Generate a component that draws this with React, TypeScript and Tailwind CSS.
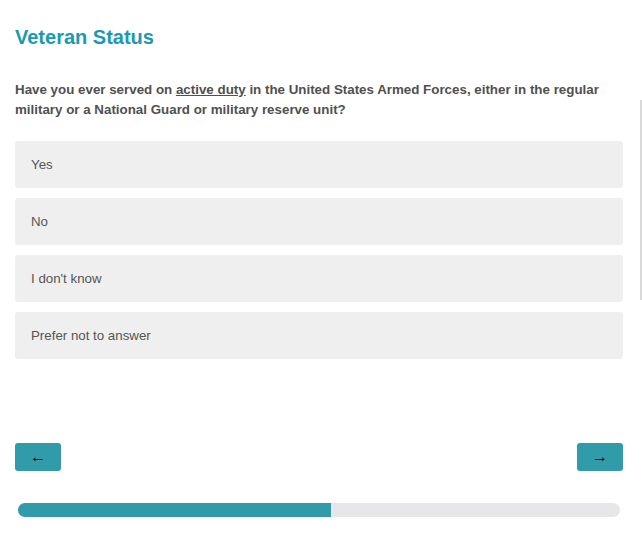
export default function App() {
  const options = ["Yes", "No", "I don't know", "Prefer not to answer"];
  return (
    <div className="relative w-[642px] h-[538px] bg-white font-['Liberation_Sans',Arial,sans-serif] text-[#555]">
      <div className="absolute right-0 top-[100px] w-[2px] h-[200px] bg-[#d9d9d9]" />
      <div className="pl-[15px] pr-[19px] pt-[24px]">
        <h1 className="text-[20px] font-bold text-[#1b9aaf] leading-[26px]">Veteran Status</h1>
        <p className="mt-[30px] text-[13.35px] font-bold leading-[20px] text-[#505050]">
          Have you ever served on <span className="underline">active duty</span> in the United States Armed
          Forces, either in the regular military or a National Guard or military reserve unit?
        </p>
        <div className="mt-[21px] flex flex-col gap-[10px]">
          {options.map((o) => (
            <div key={o} className="h-[47px] flex items-center px-[16px] bg-[#efefef] rounded-[3px] text-[13.3px]">
              {o}
            </div>
          ))}
        </div>
        <div className="mt-[84px] flex justify-between">
          <button className="w-[46px] h-[28px] bg-[#309ca9] rounded-[3px] text-black text-[16px] leading-none">←</button>
          <button className="w-[46px] h-[28px] bg-[#309ca9] rounded-[3px] text-black text-[16px] leading-none">→</button>
        </div>
        <div className="mt-[32px] mx-[3px] h-[14px] rounded-full bg-[#e7e7e9] overflow-hidden">
          <div className="h-full w-[52%] bg-[#309ca9]" />
        </div>
      </div>
    </div>
  );
}
